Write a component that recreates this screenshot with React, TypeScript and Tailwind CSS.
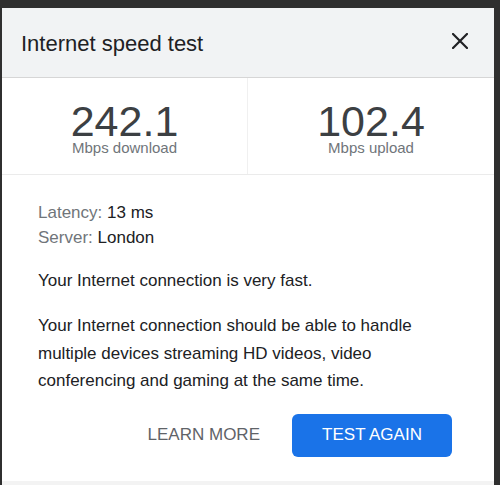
export default function App() {
  return (
    <div className="w-[500px] h-[485px] bg-[#2f2f2f] pt-2 pl-[2px] pr-[6px] font-['Liberation_Sans',Arial,sans-serif]">
      <div className="bg-white h-full flex flex-col">
        {/* Header */}
        <div className="h-[70px] shrink-0 bg-[#f1f3f4] border-b border-[#d6d6d6] flex items-center justify-between pl-[19px] pr-[26px]">
          <h1 className="text-[22px] text-[#202124] leading-none mt-[2px]">Internet speed test</h1>
          <svg width="16" height="16" viewBox="0 0 16 16" className="-mt-[3px]">
            <path d="M1 1L15 15M15 1L1 15" stroke="#202124" strokeWidth="2.2" strokeLinecap="square" />
          </svg>
        </div>

        {/* Stats */}
        <div className="grid grid-cols-2 h-[97px] shrink-0 border-b border-[#ebebeb]">
          <div className="flex flex-col items-center pt-[23px] border-r border-[#f0f0f0]">
            <span className="text-[43px] leading-[40px] text-[#3c4043]">242.1</span>
            <span className="text-[15px] leading-[14px] text-[#70757a]">Mbps download</span>
          </div>
          <div className="flex flex-col items-center pt-[23px]">
            <span className="text-[43px] leading-[40px] text-[#3c4043]">102.4</span>
            <span className="text-[15px] leading-[14px] text-[#70757a]">Mbps upload</span>
          </div>
        </div>

        {/* Body */}
        <div className="flex-1 flex flex-col px-[36px] pt-[25px]">
          <div className="text-[17px] leading-[25px]">
            <p>
              <span className="text-[#70757a]">Latency: </span>
              <span className="text-[#202124]">13 ms</span>
            </p>
            <p>
              <span className="text-[#70757a]">Server: </span>
              <span className="text-[#202124]">London</span>
            </p>
          </div>
          <p className="mt-[17px] text-[17px] leading-[27px] text-[#202124]">Your Internet connection is very fast.</p>
          <p className="mt-[18px] text-[17px] leading-[27.5px] text-[#202124]">
            Your Internet connection should be able to handle multiple devices streaming HD videos, video
            conferencing and gaming at the same time.
          </p>
          <div className="flex justify-end items-center gap-[32px] mt-[19px] pr-[6px]">
            <button type="button" className="text-[17px] text-[#5f6368]">LEARN MORE</button>
            <button
              type="button"
              className="w-[160px] h-[43px] rounded-[6px] bg-[#1a73e8] text-white text-[17px]"
            >
              TEST AGAIN
            </button>
          </div>
        </div>
        <div className="h-[4px] shrink-0 bg-[#f3f3f3]" />
      </div>
    </div>
  );
}
